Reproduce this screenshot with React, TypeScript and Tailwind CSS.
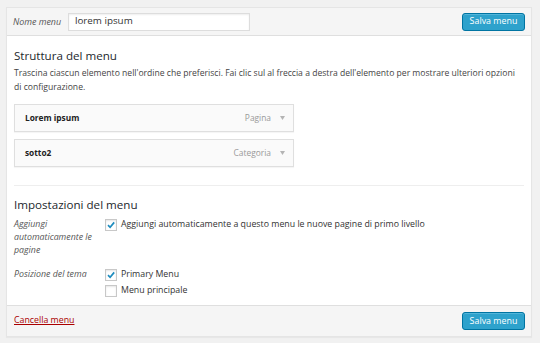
import React from "react"

const font = { fontFamily: '"Open Sans", "Noto Sans", sans-serif' }

function Check({ checked }: { checked?: boolean }) {
  return (
    <span className="flex h-[12px] w-[12px] shrink-0 items-center justify-center border border-[#c8c8c8] bg-white shadow-[inset_0_1px_2px_rgba(0,0,0,0.1)]">
      {checked && (
        <svg width="10" height="10" viewBox="0 0 10 10">
          <path d="M2 5.2 L4.1 7.3 L8.2 2.4" fill="none" stroke="#1e8cbe" strokeWidth="1.7" />
        </svg>
      )}
    </span>
  )
}

function SaveButton() {
  return (
    <button className="h-[18px] w-[63px] rounded-[3px] border border-[#0074a2] bg-[#2ea2cc] text-[8.9px] leading-none text-white shadow-[inset_0_1px_0_rgba(120,200,230,0.5)]">
      Salva menu
    </button>
  )
}

function MenuItem({ title, type }: { title: string; type: string }) {
  return (
    <div className="flex h-[28px] w-[280px] items-center justify-between border border-[#dfdfdf] bg-[#fafafa] pl-[10px] pr-[8px] shadow-[0_1px_1px_rgba(0,0,0,0.04)]">
      <span className="text-[8.3px] font-bold text-[#222]">{title}</span>
      <span className="flex items-center gap-[9px] text-[8.4px] text-[#999]">
        {type}
        <svg width="5" height="4" viewBox="0 0 5 4">
          <path d="M0 0 H5 L2.5 4 Z" fill="#b4b4b4" />
        </svg>
      </span>
    </div>
  )
}

export default function App() {
  return (
    <div className="h-[343px] w-[540px] bg-[#f1f1f1] px-[6px] pt-[7px]" style={font}>
      <div className="w-[526px] border border-[#e5e5e5] bg-white shadow-[0_1px_1px_rgba(0,0,0,0.04)]">
        <div className="flex h-[28px] items-center justify-between border-b border-[#dfdfdf] bg-[#f5f5f5] pl-[6px] pr-[6px]">
          <div className="flex items-center">
            <span className="w-[55px] text-[8.9px] italic text-[#555]">Nome menu</span>
            <div className="flex h-[18px] w-[182px] items-center border border-[#ddd] bg-white px-[6px] text-[9.8px] text-[#333] shadow-[inset_0_1px_2px_rgba(0,0,0,0.07)]">
              lorem ipsum
            </div>
          </div>
          <SaveButton />
        </div>

        <div className="px-[7px] pb-[8px] pt-[10px]">
          <h2 className="text-[11.6px] leading-[20px] text-[#23282d]">Struttura del menu</h2>
          <p className="text-[8.6px] leading-[14px] text-[#444]">
            Trascina ciascun elemento nell'ordine che preferisci. Fai clic sul al freccia a destra dell'elemento per mostrare ulteriori opzioni di configurazione.
          </p>
          <div className="mt-[10px] flex flex-col gap-[7px]">
            <MenuItem title="Lorem ipsum" type="Pagina" />
            <MenuItem title="sotto2" type="Categoria" />
          </div>

          <div className="mt-[18px] border-t border-[#eee]" />

          <h2 className="mt-[9px] text-[11.6px] leading-[20px] text-[#23282d]">Impostazioni del menu</h2>
          <div className="mt-[3px] grid grid-cols-[91px_1fr] gap-y-[11px] text-[8.8px] leading-[13px]">
            <div className="pr-[4px] italic text-[#555]">Aggiungi automaticamente le pagine</div>
            <label className="flex items-center gap-[4px] self-start text-[#333]">
              <Check checked />
              Aggiungi automaticamente a questo menu le nuove pagine di primo livello
            </label>
            <div className="italic text-[#555]">Posizione del tema</div>
            <div className="flex flex-col gap-[3px] text-[#333]">
              <label className="flex items-center gap-[4px]">
                <Check checked />
                Primary Menu
              </label>
              <label className="flex items-center gap-[4px]">
                <Check />
                Menu principale
              </label>
            </div>
          </div>
        </div>

        <div className="flex h-[31px] items-center justify-between border-t border-[#dfdfdf] bg-[#f5f5f5] pl-[7px] pr-[6px]">
          <a className="text-[8.8px] text-[#a00] underline">Cancella menu</a>
          <SaveButton />
        </div>
      </div>
    </div>
  )
}
